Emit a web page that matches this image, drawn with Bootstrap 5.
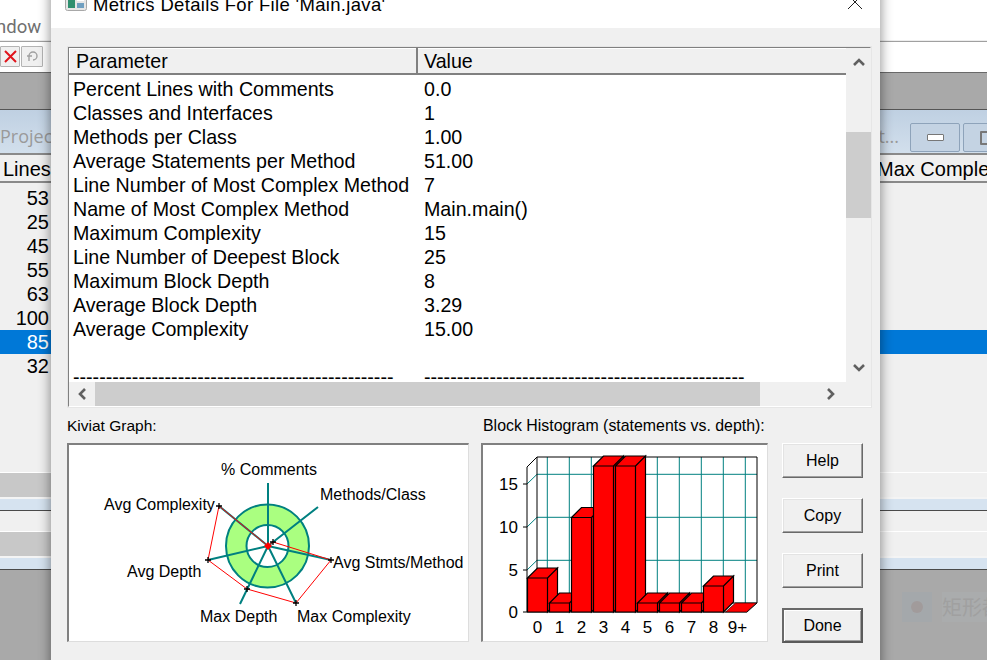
<!DOCTYPE html>
<html lang="en"><head><meta charset="utf-8"><title>Metrics Details</title>
<link href="https://cdn.jsdelivr.net/npm/bootstrap@5.3.0/dist/css/bootstrap.min.css" rel="stylesheet">
<style>
html,body{margin:0;height:660px;overflow:hidden;background:#fff}
.desk{position:relative;width:987px;height:660px;overflow:hidden;font-family:"Liberation Sans",Arial,sans-serif;color:#000}
.menu-strip{height:41px;font:18.5px/54px Roboto,sans-serif;color:#707070;overflow:hidden;border-bottom:1px solid #ededed}
.menu-word{display:block;margin-left:-4px}
.tool-strip{height:31px;border-top:1px solid #a0a0a0;padding:4px 0 0 0;gap:1px}
.tool-btn{width:20px;height:21px;background:#f0f0f0;border:1px solid #b4b4b4;border-radius:1px}
.tool-btn-b{width:22px}
.grey-band{height:38px;background:#a9a9a9;border-top:1px solid #696969;border-bottom:1px solid #555}
.blue-band{height:45px;background:linear-gradient(#bfd0e2,#d2dfec);border-bottom:2px solid #8a8a8a;color:#9a9a9a;font:18px/1 "Open Sans",sans-serif;padding:13px 0 0 0;overflow:hidden}
.band-text{margin-top:4px}
.win-group{margin-right:-26px;gap:3px}
.win-btn{width:50px;height:29px;border:1px solid #8ea3ba;border-radius:2px;background:#c4d3e3;flex:none}
.win-glyph{width:17px;height:7px;background:#fff;border:1px solid #777;border-radius:1px}
.max-glyph{width:16px;height:14px;background:#c4d3e3;border:2px solid #777;border-radius:1px}
.pane{height:317px;background:#f0f0f0;font-size:20px;line-height:24px}
.pane-head{height:28px;border-bottom:2px solid #8a8a8a;line-height:29px;white-space:nowrap;overflow:hidden}
.head-left{width:877px;flex:none;padding-left:3px}
.num-list{padding-top:3px}
.num-col{width:49px;text-align:right}
.sel-row{background:#0078d7;color:#fff;width:987px}
.split-row{height:25px;background:#f0f0f0;border-top:1px solid #fff}
.split-left{width:60px;background:#c8c8c8;height:100%}
.pale-bar{height:14px;background:#d6e3f0;border-top:2px solid #f4f4f4;border-bottom:1px solid #4a4a4a}
.plain-row{height:20px;background:#f0f0f0}
.floor{height:100px;background:#a9a9a9;padding-top:22px}
.ghost-box{width:30px;height:30px;background:#a4a8ab;margin-right:10px}
.ghost-dot{width:12px;height:12px;border-radius:50%;background:#a19b9b}
.ghost-text{width:45px;height:30px;background:#aaacad;color:#a0a0a0;font:20px/30px "Noto Sans CJK SC",sans-serif;overflow:hidden;white-space:nowrap}
.dialog{position:absolute;left:51px;top:-22px;width:829px;height:700px;background:#f0f0f0;box-shadow:0 0 11px 1px rgba(0,0,0,.42)}
.title-strip{height:50px;background:#fff;font-size:18.5px;padding:4px 0 0 14px;gap:6px;letter-spacing:.33px}
.title-icon{width:22px;height:18px;margin-top:-6px}
.close-x{margin-left:auto;margin-right:17px;margin-top:-6px}
.frame{margin:18px 8px 0 16px;height:362px;border-top:2px solid #808080;border-left:2px solid #808080;border-right:2px solid #fff;border-bottom:2px solid #fff;outline:1px solid #e6e6e6;outline-offset:-1px}
.grid-main{width:777px;height:358px}
.grid-head{height:27px;border-bottom:2px solid #808080;font-size:19.65px;line-height:27px;background:#f0f0f0;box-shadow:inset 1px 1px 0 #fff}
.head-a{width:349px;padding-left:7px;border-right:2px solid #808080}
.head-b{padding-left:6px}
.grid-body{height:307px;background:#fff;overflow:hidden;font-size:19.65px;line-height:24px;padding-top:2px;white-space:nowrap}
.cell-a{width:355px;padding-left:4px;flex:none}
.cell-b{flex:none}
.h-scroll{height:24px;background:#f0f0f0}
.h-arrow{margin-right:-26px}
.h-thumb{width:665px;height:24px;background:#cdcdcd;margin-left:26px}
.h-end{width:86px}
.v-scroll{width:25px;height:358px;background:#f0f0f0}
.v-top{height:84px}
.v-thumb{height:86px;background:#cdcdcd}
.v-end{padding-top:141px}
.v-end svg{display:block}
.lower{margin:9px 8px 0 16px;gap:12px}
.lab{font-size:15.5px;line-height:18px;margin-bottom:8px;white-space:nowrap}
.lab-h{font-size:15.9px;padding-left:2px}
.plot{height:199px;background:#fff;border-top:2px solid #808080;border-left:2px solid #808080;border-right:1px solid #ddd;border-bottom:1px solid #ddd}
.plot svg{display:block}
.plot-k{width:402px}
.plot-h{width:287px}
.btn-col{margin-top:26px;margin-left:2px;gap:20px}
.old-btn{width:81px;height:35px;padding:0;border-radius:0;background:#f0f0f0;color:#000;font:16px "Liberation Sans",Arial,sans-serif;border:1px solid;border-color:#fff #696969 #696969 #fff;box-shadow:inset -1px -1px 0 #a0a0a0,inset 1px 1px 0 #e3e3e3}
.old-btn-def{border:2px solid;border-color:#696969 #5a5a5a #5a5a5a #696969;box-shadow:inset 1px 1px 0 #fff,inset -1px -1px 0 #a0a0a0}
svg text{font-family:"Liberation Sans",Arial,sans-serif}
</style></head><body>
<div class="desk">
  <div class="menu-strip"><span class="menu-word">ndow</span></div>
  <div class="tool-strip d-flex">
    <div class="tool-btn d-flex align-items-center justify-content-center"><svg width="15" height="15" viewBox="0 0 15 15"><path d="M2 2 13 13M13 2 2 13" stroke="#e0141c" stroke-width="2"/></svg></div>
    <div class="tool-btn tool-btn-b d-flex align-items-center justify-content-center"><svg width="13" height="13" viewBox="0 0 13 13"><path d="M3 6a4 4 0 1 1 4 4M1 6h5M3 6v5" fill="none" stroke="#a0a0a0" stroke-width="1.4"/></svg></div>
  </div>
  <div class="grey-band"></div>
  <div class="blue-band d-flex justify-content-between">
    <span class="band-text">Projec</span>
    <div class="win-group d-flex"><span class="band-text me-2">At...</span>
      <div class="win-btn d-flex align-items-center justify-content-center"><div class="win-glyph"></div></div>
      <div class="win-btn d-flex align-items-center justify-content-center"><div class="max-glyph"></div></div>
    </div>
  </div>
  <div class="pane">
    <div class="pane-head d-flex"><span class="head-left">Lines</span><span>Max Complexity</span></div>
    <div class="num-list">
      <div class="num-col">53</div>
      <div class="num-col">25</div>
      <div class="num-col">45</div>
      <div class="num-col">55</div>
      <div class="num-col">63</div>
      <div class="num-col">100</div>
      <div class="sel-row"><div class="num-col">85</div></div>
      <div class="num-col">32</div>
    </div>
  </div>
  <div class="split-row"><div class="split-left"></div></div>
  <div class="pale-bar"></div>
  <div class="plain-row"></div>
  <div class="split-row"><div class="split-left"></div></div>
  <div class="pale-bar"></div>
  <div class="floor d-flex justify-content-end">
    <div class="ghost-box d-flex align-items-center justify-content-center"><div class="ghost-dot"></div></div>
    <div class="ghost-text">矩形都</div>
  </div>

  <div class="dialog">
    <div class="title-strip d-flex align-items-center">
      <svg class="title-icon" viewBox="0 0 22 18"><rect x=".5" y=".5" width="21" height="17" rx="2" fill="#e6e6e6" stroke="#a8a8a8"/><rect x="3" y="3" width="7" height="12" fill="#2f8f6f"/><rect x="12" y="3" width="7" height="5" fill="#fff"/><rect x="12" y="10" width="7" height="5" fill="#6f9fc0"/></svg>
      <span>Metrics Details For File 'Main.java'</span>
      <svg class="close-x" width="16" height="16" viewBox="0 0 16 16"><path d="M1 1 15 15M15 1 1 15" stroke="#222" stroke-width="1"/></svg>
    </div>
    <div class="frame d-flex">
      <div class="grid-main">
        <div class="grid-head d-flex"><div class="head-a">Parameter</div><div class="head-b">Value</div></div>
        <div class="grid-body">
          <div class="d-flex"><div class="cell-a">Percent Lines with Comments</div><div class="cell-b">0.0</div></div>
          <div class="d-flex"><div class="cell-a">Classes and Interfaces</div><div class="cell-b">1</div></div>
          <div class="d-flex"><div class="cell-a">Methods per Class</div><div class="cell-b">1.00</div></div>
          <div class="d-flex"><div class="cell-a">Average Statements per Method</div><div class="cell-b">51.00</div></div>
          <div class="d-flex"><div class="cell-a">Line Number of Most Complex Method</div><div class="cell-b">7</div></div>
          <div class="d-flex"><div class="cell-a">Name of Most Complex Method</div><div class="cell-b">Main.main()</div></div>
          <div class="d-flex"><div class="cell-a">Maximum Complexity</div><div class="cell-b">15</div></div>
          <div class="d-flex"><div class="cell-a">Line Number of Deepest Block</div><div class="cell-b">25</div></div>
          <div class="d-flex"><div class="cell-a">Maximum Block Depth</div><div class="cell-b">8</div></div>
          <div class="d-flex"><div class="cell-a">Average Block Depth</div><div class="cell-b">3.29</div></div>
          <div class="d-flex"><div class="cell-a">Average Complexity</div><div class="cell-b">15.00</div></div>
          <div class="d-flex"><div class="cell-a">&nbsp;</div><div class="cell-b">&nbsp;</div></div>
          <div class="d-flex"><div class="cell-a">-------------------------------------------------</div><div class="cell-b">-------------------------------------------------</div></div>
        </div>
        <div class="h-scroll d-flex align-items-center">
          <svg class="h-arrow" width="26" height="24" viewBox="0 0 26 24"><path d="M16 7 11 12 16 17" fill="none" stroke="#606060" stroke-width="2.6"/></svg>
          <div class="h-thumb"></div>
          <div class="h-end d-flex justify-content-end"><svg width="26" height="24" viewBox="0 0 26 24"><path d="M8 7 13 12 8 17" fill="none" stroke="#606060" stroke-width="2.6"/></svg></div>
        </div>
      </div>
      <div class="v-scroll">
        <div class="v-top"><svg width="25" height="28" viewBox="0 0 25 28"><path d="M8 17 13 12 18 17" fill="none" stroke="#606060" stroke-width="2.6"/></svg></div>
        <div class="v-thumb"></div>
        <div class="v-end"><svg width="25" height="26" viewBox="0 0 25 26"><path d="M8 6 13 11 18 6" fill="none" stroke="#606060" stroke-width="2.6"/></svg></div>
      </div>
    </div>
    <div class="lower d-flex">
      <div>
        <div class="lab">Kiviat Graph:</div>
        <div class="plot plot-k">
          <svg width="399" height="196" viewBox="69 445 399 196">
            <circle cx="267.5" cy="546" r="31.5" fill="none" stroke="#aaff80" stroke-width="21"/>
            <circle cx="267.5" cy="546" r="41.5" fill="none" stroke="#008080" stroke-width="2"/>
            <circle cx="267.5" cy="546" r="21" fill="none" stroke="#008080" stroke-width="2"/>
            <path d="M268 546 268 483M268 546 318 507M268 546 331 560M268 546 296 603M268 546 240 604M268 546 208 560M268 546 219 506" fill="none" stroke="#008080" stroke-width="2"/>
            <path d="M268 546 273 542 331 560 296 603 247 589 208 560 219 506Z" fill="none" stroke="#f00" stroke-width="1"/>
            <path d="M270 542h6M273 539v6M328 560h6M331 557v6M293 603h6M296 600v6M244 589h6M247 586v6M205 560h6M208 557v6M216 506h6M219 503v6" stroke="#000" stroke-width="1.3"/>
            <path d="M264 546 268 542 272 546 268 550Z" fill="#f00"/>
            <g font-size="16" fill="#000">
              <text x="221" y="475">% Comments</text>
              <text x="320" y="500">Methods/Class</text>
              <text x="104" y="510">Avg Complexity</text>
              <text x="333" y="568">Avg Stmts/Method</text>
              <text x="127" y="577">Avg Depth</text>
              <text x="200" y="622">Max Depth</text>
              <text x="297" y="622">Max Complexity</text>
            </g>
          </svg>
        </div>
      </div>
      <div>
        <div class="lab lab-h">Block Histogram (statements vs. depth):</div>
        <div class="plot plot-h">
          <svg width="284" height="196" viewBox="483 445 284 196">
            <path d="M547.3 457V603M569.3 457V603M591.3 457V603M613.3 457V603M635.3 457V603M657.3 457V603M679.3 457V603M701.3 457V603M723.3 457V603M745.3 457V603M537 474.3H757M537 517.3H757M537 560.3H757M527 484 537 474.3M527 527 537 517.3M527 570 537 560.3" fill="none" stroke="#008080" stroke-width="1"/>
            <path d="M527 612V467L537 457H757V603L747 612H523M537 457V603M523 484H527M523 527H527M523 570H527M537 603H757" fill="none" stroke="#000" stroke-width="1"/>
            <g fill="#f00" stroke="#000" stroke-width="1.2" stroke-linejoin="miter">
              <path d="M527.5 578v34h20v-34ZM527.5 578l10-10h20l-10 10ZM547.5 578l10-10v34l-10 10Z"/>
              <path d="M549.5 603v9h20v-9ZM549.5 603l10-10h20l-10 10ZM569.5 603l10-10v9l-10 10Z"/>
              <path d="M571.5 517.5V612h20V517.5ZM571.5 517.5l10-10h20l-10 10ZM591.5 517.5l10-10V602l-10 10Z"/>
              <path d="M593.5 466V612h20V466ZM593.5 466l10-10h20l-10 10ZM613.5 466l10-10V602l-10 10Z"/>
              <path d="M615.5 466V612h20V466ZM615.5 466l10-10h20l-10 10ZM635.5 466l10-10V602l-10 10Z"/>
              <path d="M637.5 603v9h20v-9ZM637.5 603l10-10h20l-10 10ZM657.5 603l10-10v9l-10 10Z"/>
              <path d="M659.5 603v9h20v-9ZM659.5 603l10-10h20l-10 10ZM679.5 603l10-10v9l-10 10Z"/>
              <path d="M681.5 603v9h20v-9ZM681.5 603l10-10h20l-10 10ZM701.5 603l10-10v9l-10 10Z"/>
              <path d="M703.5 586v26h20v-26ZM703.5 586l10-10h20l-10 10ZM723.5 586l10-10v26l-10 10Z"/>
              <path d="M725.5 612l10-9h21l-10 9Z" stroke-width=".6"/>
            </g>
            <g font-size="17" fill="#000">
              <g text-anchor="end"><text x="518" y="490">15</text><text x="518" y="533">10</text><text x="518" y="576">5</text><text x="518" y="618">0</text></g>
              <g text-anchor="middle"><text x="537.5" y="633">0</text><text x="559.5" y="633">1</text><text x="581.5" y="633">2</text><text x="603.5" y="633">3</text><text x="625.5" y="633">4</text><text x="647.5" y="633">5</text><text x="669.5" y="633">6</text><text x="691.5" y="633">7</text><text x="713.5" y="633">8</text><text x="737.5" y="633">9+</text></g>
            </g>
          </svg>
        </div>
      </div>
      <div class="btn-col d-flex flex-column">
        <button type="button" class="btn old-btn">Help</button>
        <button type="button" class="btn old-btn">Copy</button>
        <button type="button" class="btn old-btn">Print</button>
        <button type="button" class="btn old-btn old-btn-def">Done</button>
      </div>
    </div>
  </div>
</div>
<script src="https://cdn.jsdelivr.net/npm/bootstrap@5.3.0/dist/js/bootstrap.bundle.min.js"></script>
</body></html>
